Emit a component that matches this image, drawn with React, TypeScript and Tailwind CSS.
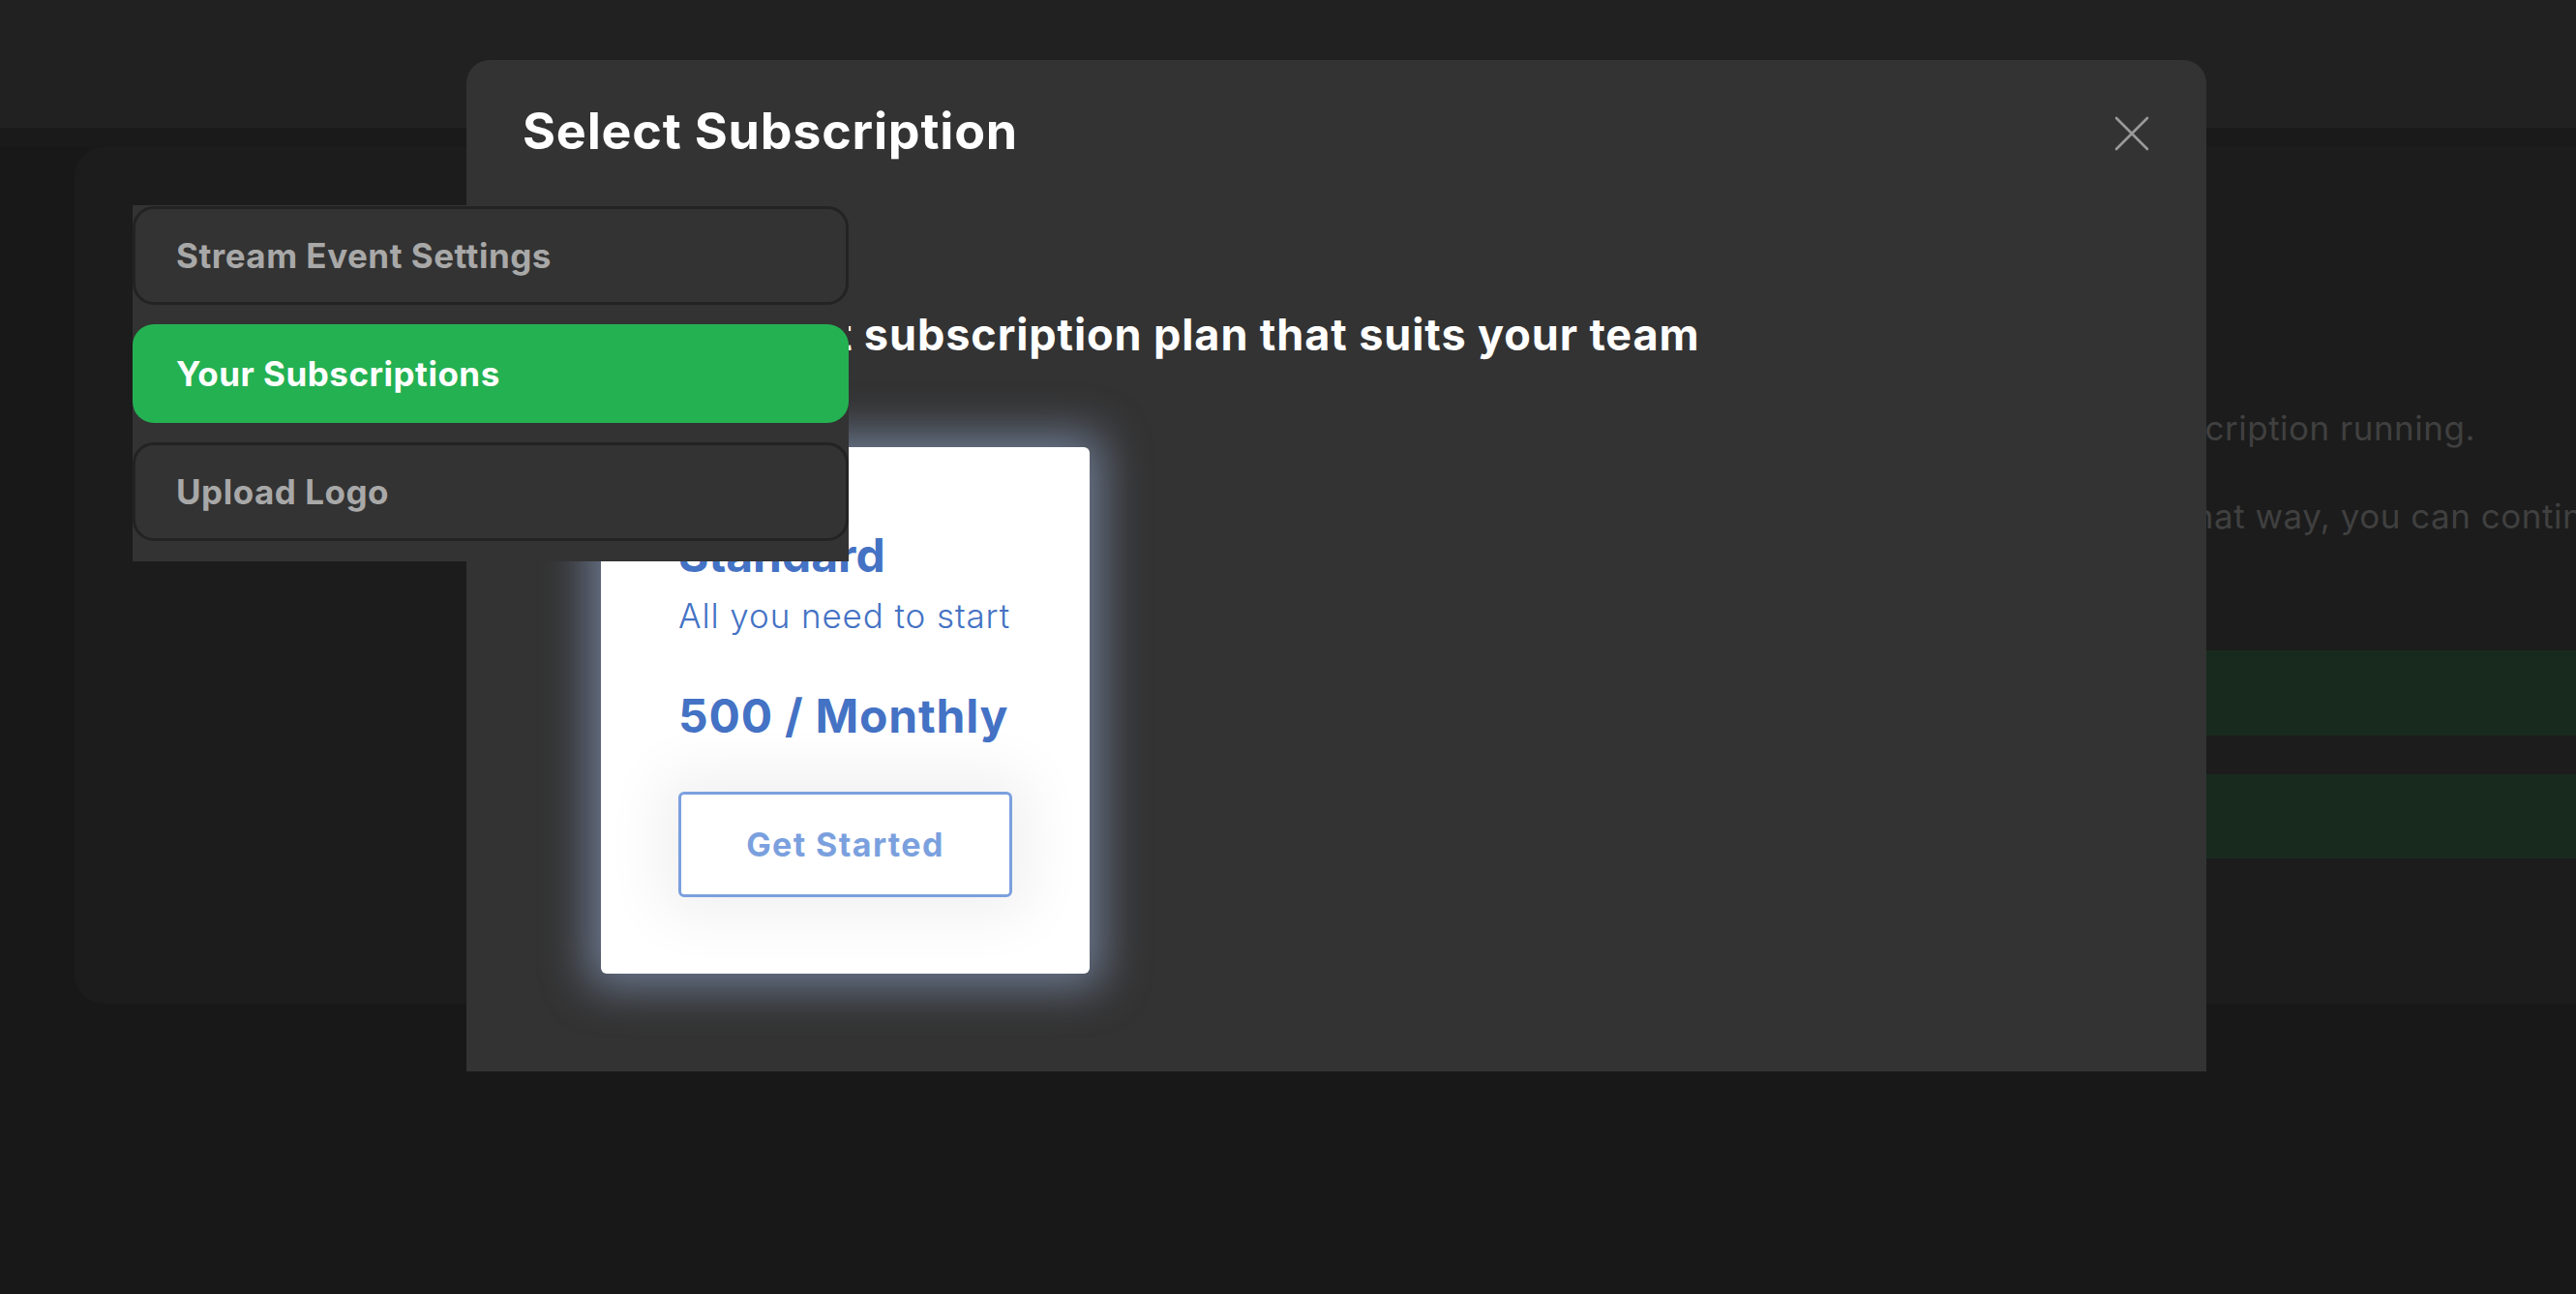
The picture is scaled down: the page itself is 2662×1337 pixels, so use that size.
import React from 'react';

const font = { fontFamily: 'Inter, "Noto Sans", sans-serif' };

const navItems = [
    { label: 'Stream Event Settings', active: false },
    { label: 'Your Subscriptions', active: true },
    { label: 'Upload Logo', active: false },
];

const SubscriptionModal = () => {
    return (
        <div className="fixed left-[482px] top-[62px] z-40 w-[1798px] h-[1045px] bg-[#333333] rounded-t-[24px] px-[58px] pt-[48px]">
            <div className="flex items-start justify-between">
                <h2 className="text-[52px] leading-none font-bold text-white tracking-[0.8px]">Select Subscription</h2>
                <button className="mt-[10px] mr-[1px] text-[#9a9a9a]">
                    <svg width="36" height="36" viewBox="0 0 36 36" fill="none" stroke="currentColor" strokeWidth="2.6" strokeLinecap="round">
                        <path d="M2 2L34 34M34 2L2 34" />
                    </svg>
                </button>
            </div>
            <p className="mt-[161px] text-[45px] leading-none font-bold text-white tracking-[0.9px]">Select the best subscription plan that suits your team</p>
            <div className="mt-[94px] ml-[81px] w-[505px] bg-white rounded-[6px] pt-[88px] px-[80px] pb-[79px] shadow-[0_0_45px_14px_rgba(128,146,176,0.75)]">
                <p className="text-[48px] leading-none font-bold text-[#4472c4]">Standard</p>
                <p className="mt-[21px] text-[35px] leading-none font-light text-[#4472c4] tracking-[0.9px]">All you need to start</p>
                <p className="mt-[62px] text-[48px] leading-none font-bold text-[#4472c4] tracking-[0.8px]">500 / Monthly</p>
                <button className="mt-[54px] w-full h-[109px] border-[3px] border-[#7ba0de] rounded-[6px] bg-white text-[#7ba0de] text-[34px] font-bold tracking-[1.4px] shadow-[0_0_60px_20px_rgba(0,0,0,0.06)]">
                    Get Started
                </button>
            </div>
        </div>
    );
};

const App = () => {
    return (
        <div style={font} className="relative w-[2662px] h-[1337px] overflow-hidden bg-[#181818]">
            <div className="h-[132px] bg-[#212121]" />
            <div className="h-[20px] bg-[#1a1a1a]" />
            <div className="ml-[77px] h-[885px] bg-[#1c1c1c] rounded-l-[30px] flex pl-[60px] pt-[60px]">
                <div className="relative z-50 w-[740px] shrink-0 self-start bg-[#333333] pt-[1px] pb-[1px]">
                    {navItems.map((item) => (
                        <div
                            key={item.label}
                            className={
                                item.active
                                    ? 'mb-5 h-[102px] rounded-[22px] bg-[#24b152] flex items-center pl-[45px] text-[35px] font-bold tracking-[0.5px] text-white whitespace-nowrap'
                                    : 'mb-5 h-[102px] rounded-[22px] border-[3px] border-[#232323] bg-[#333333] flex items-center pl-[42px] text-[35px] font-bold tracking-[0.5px] text-[#a8a8a8] whitespace-nowrap'
                            }
                        >
                            {item.label}
                        </div>
                    ))}
                </div>
                <div className="flex-1 min-w-0 pl-[60px] pt-[213px]">
                    <div className="flex justify-end pr-[104px]">
                        <div className="w-max">
                            <p className="whitespace-nowrap text-[35px] leading-none tracking-[0.5px] text-[#404040]">You currently do not have any active subscription running.</p>
                            <div className="w-0">
                                <p className="mt-[56px] whitespace-nowrap text-[35px] leading-none tracking-[0.5px] text-[#404040]">Please choose a fine subscription plan. That way, you can continue streaming your events.</p>
                            </div>
                        </div>
                    </div>
                    <div className="mt-[121px] h-[88px] bg-[#182a1e]" />
                    <div className="mt-[40px] h-[87px] bg-[#182a1e]" />
                </div>
            </div>
            <SubscriptionModal />
        </div>
    );
};

export default App;
